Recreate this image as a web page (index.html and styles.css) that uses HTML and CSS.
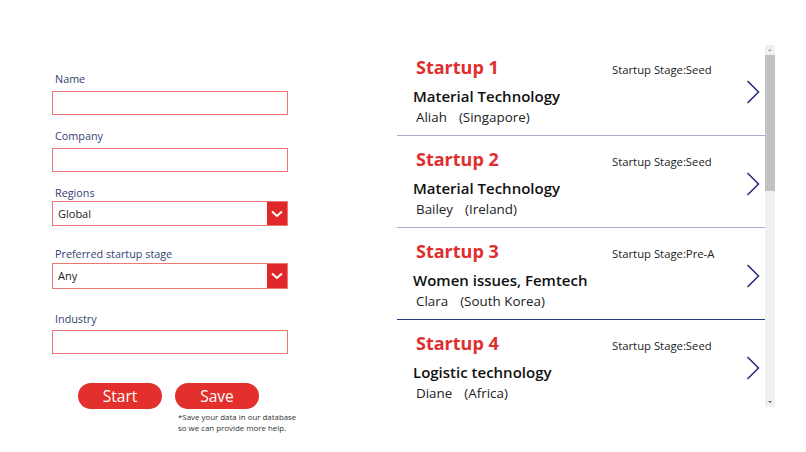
FILE: index.html
```html
<!DOCTYPE html>
<html>
<head>
<meta charset="utf-8">
<link rel="stylesheet" href="styles.css">
</head>
<body>
<div class="screen">
  <form class="form">
    <div class="field f-name">
      <label class="label">Name</label>
      <div class="input"></div>
    </div>
    <div class="field f-company">
      <label class="label">Company</label>
      <div class="input"></div>
    </div>
    <div class="field f-region">
      <label class="label">Regions</label>
      <div class="select"><span class="sel-text">Global</span><span class="sel-btn"><svg width="12" height="8" viewBox="0 0 12 8"><path d="M1 1.5 L6 6 L11 1.5" fill="none" stroke="#fff" stroke-width="2"/></svg></span></div>
    </div>
    <div class="field f-stage">
      <label class="label">Preferred startup stage</label>
      <div class="select tall"><span class="sel-text">Any</span><span class="sel-btn"><svg width="12" height="8" viewBox="0 0 12 8"><path d="M1 1.5 L6 6 L11 1.5" fill="none" stroke="#fff" stroke-width="2"/></svg></span></div>
    </div>
    <div class="field f-industry">
      <label class="label">Industry</label>
      <div class="input"></div>
    </div>
    <div class="actions">
      <button type="button" class="btn">Start</button>
      <div class="save-col">
        <button type="button" class="btn">Save</button>
        <p class="note">*Save your data in our database<br>so we can provide more help.</p>
      </div>
    </div>
  </form>

  <div class="list-wrap">
    <div class="list">
      <div class="row">
        <div class="row-main">
          <div class="row-top"><span class="title">Startup 1</span><span class="stage">Startup Stage:Seed</span></div>
          <div class="industry">Material Technology</div>
          <div class="person">Aliah<span class="loc">(Singapore)</span></div>
        </div>
        <svg class="chev" width="14" height="24" viewBox="0 0 14 24"><path d="M1.5 1 L12.5 12 L1.5 23" fill="none" stroke="#2a2f78" stroke-width="1.6"/></svg>
      </div>
      <div class="row">
        <div class="row-main">
          <div class="row-top"><span class="title">Startup 2</span><span class="stage">Startup Stage:Seed</span></div>
          <div class="industry">Material Technology</div>
          <div class="person">Bailey<span class="loc">(Ireland)</span></div>
        </div>
        <svg class="chev" width="14" height="24" viewBox="0 0 14 24"><path d="M1.5 1 L12.5 12 L1.5 23" fill="none" stroke="#2a2f78" stroke-width="1.6"/></svg>
      </div>
      <div class="row dark">
        <div class="row-main">
          <div class="row-top"><span class="title">Startup 3</span><span class="stage">Startup Stage:Pre-A</span></div>
          <div class="industry">Women issues, Femtech</div>
          <div class="person">Clara<span class="loc">(South Korea)</span></div>
        </div>
        <svg class="chev" width="14" height="24" viewBox="0 0 14 24"><path d="M1.5 1 L12.5 12 L1.5 23" fill="none" stroke="#2a2f78" stroke-width="1.6"/></svg>
      </div>
      <div class="row last">
        <div class="row-main">
          <div class="row-top"><span class="title">Startup 4</span><span class="stage">Startup Stage:Seed</span></div>
          <div class="industry">Logistic technology</div>
          <div class="person">Diane<span class="loc">(Africa)</span></div>
        </div>
        <svg class="chev" width="14" height="24" viewBox="0 0 14 24"><path d="M1.5 1 L12.5 12 L1.5 23" fill="none" stroke="#2a2f78" stroke-width="1.6"/></svg>
      </div>
    </div>
    <div class="scrollbar">
      <span class="arrow up"></span>
      <div class="track"><div class="thumb"></div></div>
      <span class="arrow down"></span>
    </div>
  </div>
</div>
</body>
</html>
```

FILE: styles.css
```css
* { box-sizing: border-box; }
html, body { margin: 0; padding: 0; background: #fff; }
body {
  font-family: "Open Sans", "Noto Sans", "Liberation Sans", sans-serif;
  color: #1a1a1a;
  width: 806px;
  height: 452px;
  overflow: hidden;
}
.screen {
  display: flex;
  align-items: flex-start;
}

/* ---------- form ---------- */
.form {
  width: 397px;
  padding: 72px 0 0 52px;
  display: flex;
  flex-direction: column;
}
.field { display: flex; flex-direction: column; width: 236px; }
.label {
  font-size: 10.8px;
  line-height: 14px;
  color: #333f72;
  padding-left: 3px;
}
.input {
  height: 24px;
  border: 1.5px solid #ec7772;
  background: #fff;
}
.f-name .input, .f-company .input { margin-top: 5px; }
.f-company { margin-top: 14px; }
.f-region { margin-top: 14px; }
.f-region .select { margin-top: 1px; }
.f-stage { margin-top: 21px; }
.f-stage .select { margin-top: 2px; height: 26px; }
.f-industry { margin-top: 23px; }
.f-industry .input { margin-top: 4px; }

.select {
  height: 25px;
  border: 1.5px solid #ec7772;
  display: flex;
  align-items: stretch;
}
.sel-text {
  flex: 1;
  font-size: 11px;
  line-height: 23px;
  padding-left: 5px;
  color: #222;
}
.sel-btn {
  width: 20px;
  background: #e0282a;
  display: flex;
  align-items: center;
  justify-content: center;
}

.actions {
  margin-top: 29px;
  margin-left: 26px;
  display: flex;
  gap: 13px;
  align-items: flex-start;
}
.btn {
  width: 84px;
  height: 26px;
  border: none;
  border-radius: 13px;
  background: #e3302c;
  color: #fff;
  font-family: inherit;
  font-size: 15.5px;
  line-height: 26px;
  padding: 0;
}
.save-col { display: flex; flex-direction: column; }
.note {
  margin: 3px 0 0 3px;
  font-size: 7.9px;
  line-height: 11px;
  color: #333;
  white-space: nowrap;
}

/* ---------- list ---------- */
.list-wrap {
  margin-top: 44px;
  display: flex;
  align-items: flex-start;
}
.list {
  width: 368px;
  display: flex;
  flex-direction: column;
}
.row {
  height: 92px;
  border-bottom: 1px solid #a9abc9;
  display: flex;
  align-items: flex-start;
}
.row.dark { border-bottom: 1.5px solid #2c3888; }
.row.last { border-bottom: none; }
.row-main {
  flex: 1;
  padding: 11px 0 0 16px;
}
.row-top {
  display: flex;
  align-items: baseline;
}
.title {
  width: 199px;
  padding-left: 3px;
  font-size: 18px;
  font-weight: 700;
  line-height: 24px;
  color: #e02e2e;
}
.stage {
  font-size: 11.3px;
  color: #222;
}
.industry {
  margin-top: 7px;
  font-size: 15px;
  font-weight: 600;
  line-height: 20px;
  color: #111;
}
.person {
  margin-top: 1px;
  padding-left: 3px;
  font-size: 13.4px;
  line-height: 20px;
  color: #222;
}
.loc { margin-left: 12px; }
.chev {
  margin: 36px 5px 0 0;
  flex: none;
}

.scrollbar {
  margin-top: 1px;
  width: 10px;
  height: 362px;
  background: #f0f0f0;
  display: flex;
  flex-direction: column;
  align-items: center;
}
.arrow {
  width: 0; height: 0;
  border-left: 2px solid transparent;
  border-right: 2px solid transparent;
  margin: 4px 0;
}
.arrow.up { border-bottom: 2px solid #a0a0a0; }
.arrow.down { border-top: 2px solid #606060; }
.track { flex: 1; width: 100%; }
.thumb {
  width: 100%;
  height: 136px;
  background: #c1c1c1;
}
```
